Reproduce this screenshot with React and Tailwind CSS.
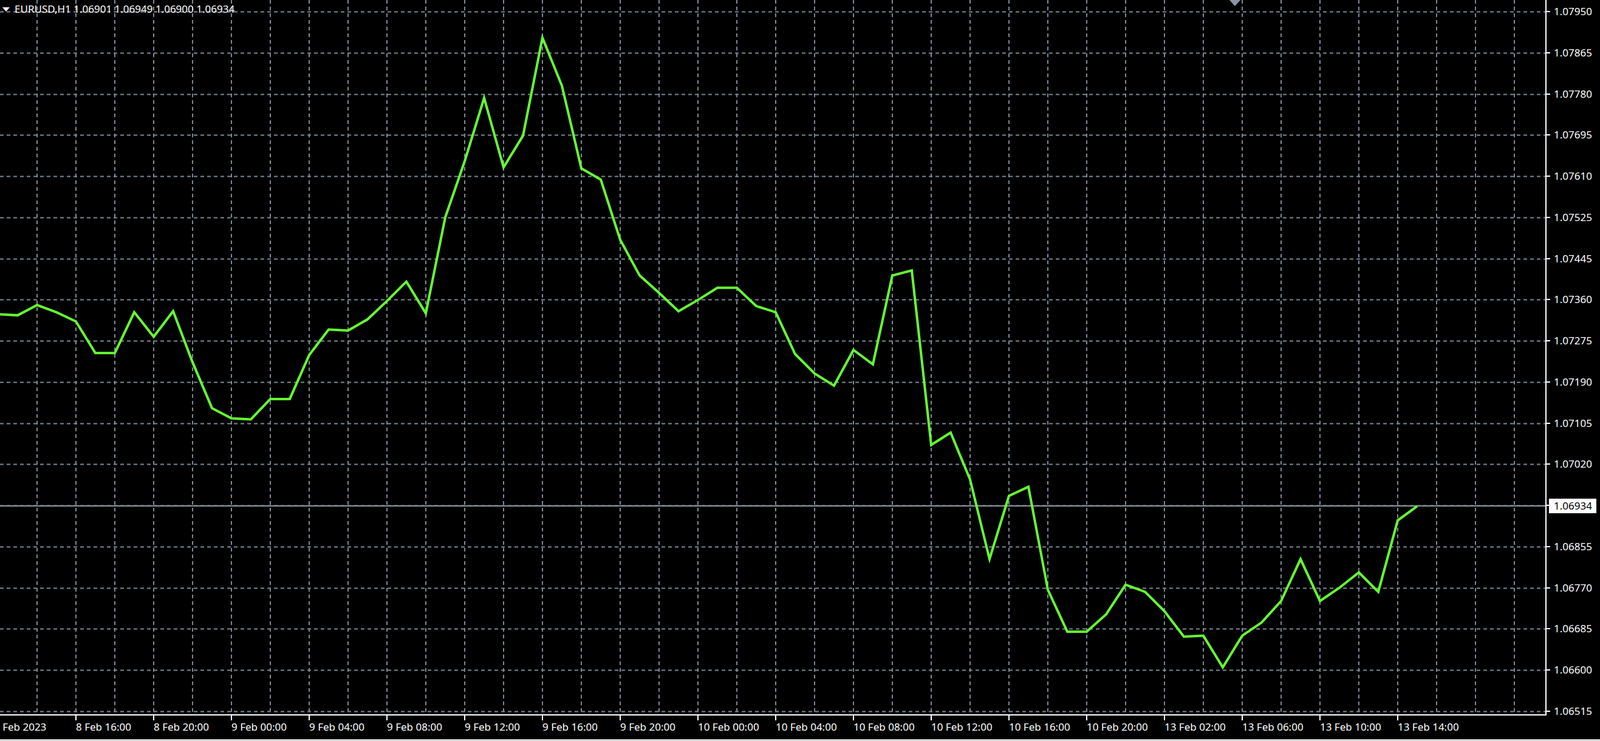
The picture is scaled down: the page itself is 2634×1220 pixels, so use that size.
import React from "react";

// close prices, in screen y of the 1568px-wide capture (x1.68 to get real pixels)
const disp = [308,309,299,306,315,346,346,306,330,305,355,400,410,411,391,391,348,323,324,313,295,276,307,213,158,96,164,133,37,84,165,176,235,270,287,305,294,282,282,300,306,347,366,378,343,357,270,265,436,424,470,548,486,477,578,619,619,602,573,580,599,624,623,654,623,610,589,548,589,576,561,580,510,496];

const N = disp.length;
const pts = disp.map((y, i) => `${2333 - 32 * (N - 1 - i)},${(y * 1.68).toFixed(1)}`).join(" ");

const labels = ["1.07950","1.07865","1.07780","1.07695","1.07610","1.07525","1.07445","1.07360","1.07275","1.07190","1.07105","1.07020","1.06940","1.06855","1.06770","1.06685","1.06600","1.06515"];
const prices = labels.map((label, i) => ({ label, y: 19 + i * 67.76 }));

const times = ["8 Feb 16:00","8 Feb 20:00","9 Feb 00:00","9 Feb 04:00","9 Feb 08:00","9 Feb 12:00","9 Feb 16:00","9 Feb 20:00","10 Feb 00:00","10 Feb 04:00","10 Feb 08:00","10 Feb 12:00","10 Feb 16:00","10 Feb 20:00","13 Feb 02:00","13 Feb 06:00","13 Feb 10:00","13 Feb 14:00"];

const vlines = Array.from({ length: 39 }, (_, k) => 61 + 64 * k);

export default function App() {
  return (
    <div className="w-[2634px] h-[1220px] bg-black overflow-hidden border-b-[3px] border-[#d4d4d4]">
      <svg width="2634" height="1217" className="block font-['DejaVu_Sans',_'Liberation_Sans',_sans-serif]">
        {/* grid */}
        {prices.map((p) => (
          <line key={p.label} x1="0" x2="2545" y1={Math.round(p.y) + 0.5} y2={Math.round(p.y) + 0.5} stroke="#7d8896" strokeWidth="2" strokeDasharray="6 5" />
        ))}
        {vlines.map((x) => (
          <line key={x} x1={x} x2={x} y1="0" y2="1177" stroke="#7d8896" strokeWidth="2" strokeDasharray="6 5" />
        ))}
        <line x1="0" x2="2545" y1="833" y2="833" stroke="#8a94a2" strokeWidth="2" />

        {/* price line */}
        <polyline points={pts} fill="none" stroke="#66ff33" strokeWidth="4" strokeLinejoin="miter" />

        {/* axes */}
        <line x1="2545" x2="2545" y1="0" y2="1178" stroke="#fff" strokeWidth="2" />
        <line x1="0" x2="2546" y1="1177" y2="1177" stroke="#fff" strokeWidth="2" />
        {prices.map((p) => (
          <line key={"t" + p.label} x1="2545" x2="2552" y1={Math.round(p.y)} y2={Math.round(p.y)} stroke="#fff" strokeWidth="2" />
        ))}
        {[-3, ...times.map((_, k) => 125 + 128 * k)].map((x) => (
          <line key={"x" + x} x1={x} x2={x} y1="1177" y2="1186" stroke="#fff" strokeWidth="2" />
        ))}

        <polygon points="2024,0 2042,0 2033,10" fill="#8d95a8" />
        <polygon points="4,12 16,12 10,19" fill="#fff" />

        <g fill="#fff" fontSize="17">
          <text x="24" y="21">EURUSD,H1  1.06901 1.06949 1.06900 1.06934</text>
          {prices.map((p) => (
            <text key={"l" + p.label} x="2558" y={p.y + 6}>{p.label}</text>
          ))}
          <text x="-10" y="1203">8 Feb 2023</text>
          {times.map((t, k) => (
            <text key={t} x={125 + 128 * k} y="1203">{t}</text>
          ))}
        </g>

        {/* current price tag */}
        <rect x="2550" y="821" width="78" height="24" fill="#fff" />
        <text x="2558" y="839" fill="#000" fontSize="17">1.06934</text>
      </svg>
    </div>
  );
}
